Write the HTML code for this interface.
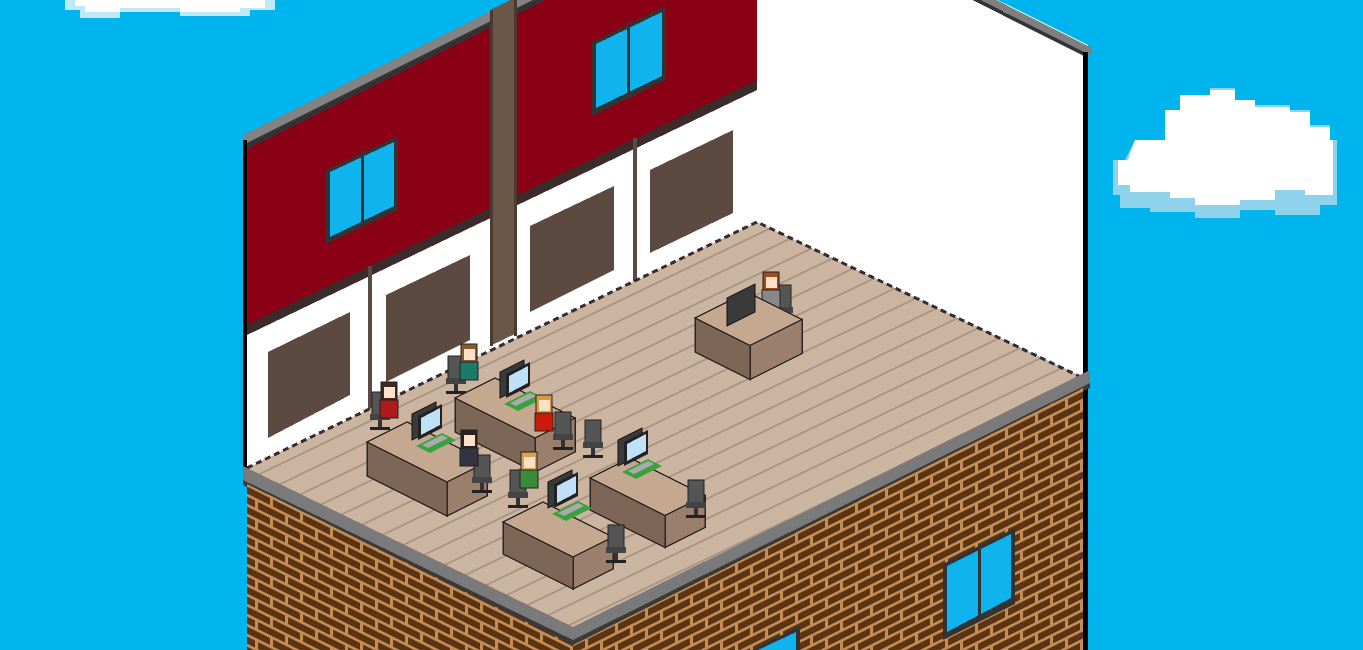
<!DOCTYPE html>
<html><head><meta charset="utf-8"><style>
html,body{margin:0;padding:0;background:#00b4ee;overflow:hidden}
svg{display:block}
</style></head><body>
<svg id="s" width="1363" height="650" viewBox="0 0 1363 650" xmlns="http://www.w3.org/2000/svg" shape-rendering="crispEdges">
<defs>
<pattern id="brL" width="30" height="20" patternUnits="userSpaceOnUse" patternTransform="skewY(26.57)">
<rect width="30" height="20" fill="#5a3413"/>
<rect width="30" height="3" fill="#c38d55"/><rect y="10" width="30" height="3" fill="#c38d55"/>
<rect x="0" y="0" width="3" height="10" fill="#c38d55"/><rect x="15" y="10" width="3" height="10" fill="#c38d55"/>
</pattern>
<pattern id="brR" width="30" height="20" patternUnits="userSpaceOnUse" patternTransform="skewY(-26.57)">
<rect width="30" height="20" fill="#5a3413"/>
<rect width="30" height="3" fill="#c38d55"/><rect y="10" width="30" height="3" fill="#c38d55"/>
<rect x="0" y="0" width="3" height="10" fill="#c38d55"/><rect x="15" y="10" width="3" height="10" fill="#c38d55"/>
</pattern>
<pattern id="fl" width="40" height="20" patternUnits="userSpaceOnUse" patternTransform="skewY(-25.7)">
<rect width="40" height="20" fill="#cbb5a0"/>
<rect y="18" width="40" height="2" fill="#a99482"/>
</pattern>
</defs>
<g fill="#fff">
<path d="M65 0H275V10H250V16H180V12H120V18H80V10H65Z" fill="#bfe9f7"/>
<path d="M75 0H265V8H240V12H180V8H120V12H85V6H75Z"/>
<path d="M1135 140H1165V110H1180V95H1210V88H1235V100H1255V105H1290V110H1310V125H1330V140H1337V205H1320V215H1275V210H1240V218H1195V212H1150V208H1120V195H1113V160H1125Z" fill="#8fd2ec"/>
<path d="M1135 140H1165V110H1180V95H1210V90H1235V100H1255V107H1290V112H1310V127H1330V140H1333V195H1305V190H1275V200H1240V205H1195V198H1170V192H1130V185H1118V160H1128Z"/>
</g>
<polygon points="757,-120 1088,45 1088,380 757,222" fill="#ffffff"/>
<polygon points="757,-120 1092,48 1092,56 757,-112" fill="#7f7f7f"/>
<polygon points="757,-112 1088,54 1088,58 757,-108" fill="#333"/>
<rect x="1083" y="52" width="5" height="598" fill="#000"/>
<polygon points="247,148 757,-108 757,222 247,468" fill="#ffffff"/>
<polygon points="247,148 757,-108 757,80 247,325" fill="#8a0014"/>
<polygon points="247,325 757,80 757,90 247,335" fill="#3b2b2b"/>
<polygon points="243,135 757,-122 757,-112 243,145" fill="#828282"/>
<polygon points="243,145 757,-112 757,-106 243,151" fill="#333"/>
<rect x="243" y="140" width="4" height="340" fill="#000"/>
<rect x="368" y="266" width="4" height="150" fill="#5a4a42"/>
<rect x="633" y="138" width="4" height="150" fill="#5a4a42"/>
<g fill="#5c4a40">
<polygon points="268,352 350,312 350,395 268,438"/>
<polygon points="386,295 470,255 470,340 386,382"/>
<polygon points="530,226 614,186 614,270 530,312"/>
<polygon points="650,170 733,130 733,213 650,253"/>
</g>
<polygon points="490,10 517,-3 517,333 490,346" fill="#6b5648"/>
<rect x="490" y="10" width="3" height="336" fill="#4a3a32"/>
<rect x="514" y="0" width="3" height="336" fill="#4a3a32"/>
<polygon points="326,170 398,136 398,210 326,244" fill="#333"/>
<polygon points="330,172 394,142 394,206 330,237" fill="#0fb3ee"/>
<rect x="361" y="150" width="3" height="75" fill="#333"/>
<polygon points="592,42 666,6 666,80 592,116" fill="#333"/>
<polygon points="596,44 662,12 662,76 596,108" fill="#0fb3ee"/>
<rect x="627" y="22" width="3" height="75" fill="#333"/>
<polygon points="247,468 757,222 1083,378 573,632" fill="url(#fl)"/>
<polyline points="247,468 757,222 1083,378" fill="none" stroke="#3b2b2b" stroke-width="3" stroke-dasharray="6 4"/>
<polygon points="243,466 573,627 1090,370 1090,385 573,642 243,482" fill="#7a7a7a"/>
<polygon points="243,480 573,640 1090,383 1090,388 573,646 243,485" fill="#3a3a3a"/>
<polygon points="247,484 573,645 573,650 247,650" fill="url(#brL)"/>
<polygon points="573,645 1083,388 1083,650 573,650" fill="url(#brR)"/>
<polygon points="943,564 1015,528 1015,604 943,640" fill="#333"/>
<polygon points="947,566 1011,534 1011,598 947,632" fill="#0fb3ee"/>
<rect x="978" y="545" width="3" height="75" fill="#333"/>
<polygon points="752,650 800,626 800,650" fill="#333"/>
<polygon points="758,650 796,632 796,650" fill="#0fb3ee"/>
<g id="furn"></g>
</svg>
<script>
var g=document.getElementById('furn'),h='';
function poly(p,c){h+='<polygon points="'+p.map(function(q){return q[0]+','+q[1]}).join(' ')+'" fill="'+c+'" stroke="#2e2424" stroke-width="1.5"/>';}
function box(x,y,a,b,H){var P0=[x,y],P1=[x+a,y-a/2],P2=[x+a+b,y-a/2+b/2],P3=[x+b,y+b/2];
poly([P0,P3,[P3[0],P3[1]+H],[P0[0],P0[1]+H]],'#7e6656');
poly([P3,P2,[P2[0],P2[1]+H],[P3[0],P3[1]+H]],'#9a806c');
poly([P0,P1,P2,P3],'#c4a890');}
function chair(x,y){h+='<rect x="'+x+'" y="'+y+'" width="16" height="24" fill="#555" stroke="#222"/><rect x="'+(x-2)+'" y="'+(y+22)+'" width="20" height="6" fill="#444"/><rect x="'+(x+6)+'" y="'+(y+28)+'" width="4" height="8" fill="#333"/><rect x="'+(x-2)+'" y="'+(y+35)+'" width="20" height="3" fill="#222"/>';}
function mon(x,y){h+='<polygon points="'+x+','+(y+12)+' '+(x+24)+','+y+' '+(x+24)+','+(y+26)+' '+x+','+(y+38)+'" fill="#3a3a3a" stroke="#111"/>';
h+='<polygon points="'+(x+6)+','+(y+14)+' '+(x+30)+','+(y+2)+' '+(x+30)+','+(y+26)+' '+(x+6)+','+(y+38)+'" fill="#222"/><polygon points="'+(x+9)+','+(y+16)+' '+(x+28)+','+(y+6)+' '+(x+28)+','+(y+23)+' '+(x+9)+','+(y+33)+'" fill="#bfe1f7"/>';
h+='<polygon points="'+(x+4)+','+(y+44)+' '+(x+30)+','+(y+31)+' '+(x+44)+','+(y+38)+' '+(x+18)+','+(y+51)+'" fill="#3aa040"/><polygon points="'+(x+10)+','+(y+43)+' '+(x+30)+','+(y+33)+' '+(x+36)+','+(y+36)+' '+(x+16)+','+(y+46)+'" fill="#aaa"/>';}
function person(x,y,hair,shirt){h+='<rect x="'+x+'" y="'+(y+18)+'" width="18" height="18" fill="'+shirt+'" stroke="#222"/><rect x="'+(x+1)+'" y="'+y+'" width="16" height="18" fill="'+hair+'" stroke="#222"/><rect x="'+(x+4)+'" y="'+(y+5)+'" width="11" height="11" fill="#fde0c8"/>';}
chair(775,285);person(762,272,'#a24b1a','#888');
box(695,318,52,55,34);
h+='<polygon points="727,298 755,284 755,312 727,326" fill="#3a3a3a" stroke="#111"/>';
chair(448,356);person(460,344,'#8a5a2a','#1c7a6a');
chair(372,392);person(380,382,'#3a2a22','#b01a1a');
box(455,398,40,80,34);
box(367,442,40,80,34);
mon(500,360);mon(412,402);
chair(555,412);person(535,395,'#d89a3a','#cc1a0a');
chair(474,455);person(460,430,'#2a2222','#334');
chair(585,420);
box(590,478,40,75,32);
chair(510,470);person(520,452,'#d8a050','#3a8a3a');
box(503,522,40,70,32);
mon(618,428);mon(548,470);
chair(688,480);chair(608,525);
g.innerHTML=h;
</script>
</body></html>
